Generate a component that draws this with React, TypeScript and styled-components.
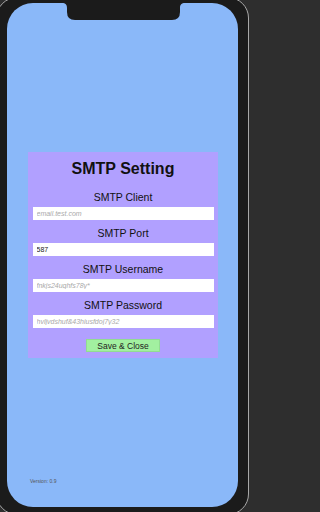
import React, { useState } from "react";
import styled, { createGlobalStyle } from "styled-components";

const GlobalStyle = createGlobalStyle`
  html, body {
    margin: 0;
    padding: 0;
    background: #2e2e2e;
    overflow: hidden;
    font-family: "Liberation Sans", Arial, sans-serif;
  }
`;

type Field = {
  label: string;
  placeholder: string;
  value?: string;
};

const fields: Field[] = [
  { label: "SMTP Client", placeholder: "email.test.com" },
  { label: "SMTP Port", placeholder: "", value: "587" },
  { label: "SMTP Username", placeholder: "fnkjs24ughfs78y*" },
  { label: "SMTP Password", placeholder: "hvljvdshuf&43hiusfdoj7y32" },
];

function Notch() {
  return (
    <NotchWrapper>
      <svg width="123" height="18" viewBox="0 0 123 18">
        <path
          d="M0 0 C3.5 0 5 1.5 5 5 L5 9 Q5 17 13 17 L110 17 Q118 17 118 9 L118 5 C118 1.5 119.5 0 123 0 Z"
          fill="#1b1b1b"
        />
      </svg>
    </NotchWrapper>
  );
}

function App() {
  const [values, setValues] = useState<string[]>(
    fields.map((f) => f.value || "")
  );

  return (
    <>
      <GlobalStyle />
      <Frame>
        <Screen>
          <Notch />
          <Main>
            <Card>
              <Title>SMTP Setting</Title>
              {fields.map((f, i) => (
                <Group key={f.label}>
                  <Label>{f.label}</Label>
                  <Input
                    type="text"
                    placeholder={f.placeholder}
                    value={values[i]}
                    onChange={(e) => {
                      const next = [...values];
                      next[i] = e.target.value;
                      setValues(next);
                    }}
                  />
                </Group>
              ))}
              <SaveButton>Save &amp; Close</SaveButton>
            </Card>
          </Main>
          <Footer>Version: 0.9</Footer>
        </Screen>
      </Frame>
    </>
  );
}

export default App;

const Frame = styled.div`
  box-sizing: border-box;
  width: 253px;
  height: 518px;
  margin: -3px 0 0 -4px;
  padding: 5px 10px 7px 10px;
  border: 1px solid #a8a8a8;
  border-radius: 21px;
  background: #1b1b1b;
`;

const Screen = styled.div`
  position: relative;
  display: flex;
  flex-direction: column;
  height: 100%;
  border-radius: 26px;
  background: #8ab8f9;
  overflow: hidden;
`;

const NotchWrapper = styled.div`
  position: absolute;
  top: 0;
  left: 55px;
  line-height: 0;
`;

const Main = styled.div`
  flex: 1;
  display: flex;
  align-items: center;
  justify-content: center;
  padding-top: 30px;
`;

const Card = styled.div`
  box-sizing: border-box;
  width: 190px;
  display: flex;
  flex-direction: column;
  align-items: center;
  padding: 7px 4px 6px 5px;
  background: #b1a0ff;
`;

const Title = styled.h1`
  margin: 0 0 12px;
  font-size: 16px;
  line-height: 20px;
  font-weight: 700;
  color: #111;
`;

const Group = styled.div`
  width: 100%;
  display: flex;
  flex-direction: column;
  align-items: center;
  margin-bottom: 7px;
`;

const Label = styled.label`
  font-size: 10.5px;
  line-height: 13px;
  color: #111;
  margin-bottom: 3px;
`;

const Input = styled.input`
  box-sizing: border-box;
  width: 100%;
  height: 13px;
  padding: 0 4px;
  border: none;
  background: #fff;
  font-family: "Liberation Sans", Arial, sans-serif;
  font-size: 7px;
  color: #222;

  &::placeholder {
    color: #a9a9a9;
    font-style: italic;
  }

  &:focus {
    outline: none;
  }
`;

const SaveButton = styled.button`
  box-sizing: border-box;
  width: 74px;
  height: 13px;
  margin-top: 4px;
  padding: 0;
  border: 1px solid #92dc92;
  background: #a2f0a0;
  font-family: "Liberation Sans", Arial, sans-serif;
  font-size: 8.5px;
  color: #222;
  cursor: pointer;
`;

const Footer = styled.div`
  padding: 0 0 22px 23px;
  font-size: 5px;
  line-height: 8px;
  color: #555;
`;
